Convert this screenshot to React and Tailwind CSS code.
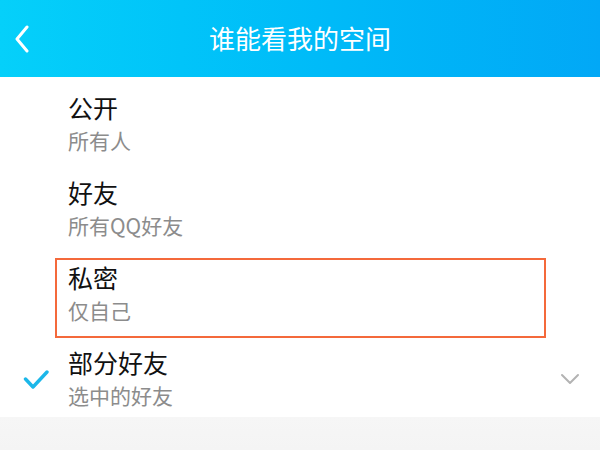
import React from "react";

const options = [
  { title: "公开", sub: "所有人" },
  { title: "好友", sub: "所有QQ好友" },
  { title: "私密", sub: "仅自己", boxed: true },
  { title: "部分好友", sub: "选中的好友", checked: true, more: true },
];

function Row({ item }) {
  return (
    <div className="relative h-[85px] flex items-start">
      <div className="w-[68px] h-full flex items-center justify-center shrink-0">
        {item.checked && (
          <svg width="26" height="22" viewBox="0 0 26 22" className="mt-[12px] ml-[4px]">
            <path d="M2.5 9 L10 17 L24 2" fill="none" stroke="#1cb7e9" strokeWidth="3.4" strokeLinecap="round" strokeLinejoin="round" />
          </svg>
        )}
      </div>
      <div className="flex-1 pt-[15px]">
        <div className="text-[25px] leading-[31px] text-[#111]">{item.title}</div>
        <div className="mt-[4px] text-[21px] leading-[27px] text-[#8c8c8c]">{item.sub}</div>
      </div>
      {item.more && (
        <div className="w-[60px] h-full flex items-center justify-center">
          <svg width="20" height="12" viewBox="0 0 20 12" className="mt-[8px]">
            <path d="M2 2 L10 10 L18 2" fill="none" stroke="#b3b3b3" strokeWidth="2" strokeLinecap="round" strokeLinejoin="round" />
          </svg>
        </div>
      )}
      {item.boxed && (
        <div className="absolute left-[55px] top-[11px] w-[491px] h-[80px] border-[2.5px] border-[#f4693b] pointer-events-none" />
      )}
    </div>
  );
}

export default function App() {
  return (
    <div
      className="w-[600px] h-[450px] overflow-hidden bg-white flex flex-col"
      style={{ fontFamily: '"Noto Sans CJK SC", "Noto Sans", sans-serif' }}
    >
      <div className="h-[77px] shrink-0 flex items-center relative bg-gradient-to-r from-[#05d0fa] to-[#02a8f6]">
        <svg width="16" height="28" viewBox="0 0 16 28" className="ml-[14px]">
          <path d="M13 2 L3 14 L13 26" fill="none" stroke="#fff" strokeWidth="3" strokeLinecap="round" strokeLinejoin="round" />
        </svg>
        <div className="absolute inset-x-0 text-center text-white text-[26px] leading-[30px] -mt-[2px] pointer-events-none">
          谁能看我的空间
        </div>
      </div>
      <div className="flex flex-col">
        {options.map((o) => (
          <Row key={o.title} item={o} />
        ))}
      </div>
      <div className="flex-1 bg-gradient-to-b from-[#f6f6f6] to-[#f4f4f4]" />
    </div>
  );
}
